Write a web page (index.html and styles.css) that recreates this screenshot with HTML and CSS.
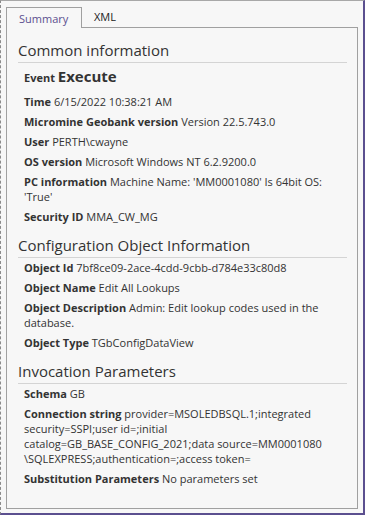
FILE: index.html
```html
<!DOCTYPE html>
<html lang="en">
<head>
  <meta charset="UTF-8">
  <meta name="viewport" content="width=device-width, initial-scale=1.0">
  <title>Event Summary</title>
  <link rel="stylesheet" href="styles.css">
</head>
<body>
  <div class="window">
    <div class="tabs">
      <div class="tab active">Summary</div>
      <div class="tab">XML</div>
    </div>

    <div class="tab-panel">
      <h2 class="section-title">Common information</h2>
      <div class="row event"><b>Event</b> <span class="event-name">Execute</span></div>
      <div class="row"><b>Time</b> 6/15/2022 10:38:21 AM</div>
      <div class="row"><b>Micromine Geobank version</b> Version 22.5.743.0</div>
      <div class="row"><b>User</b> PERTH\cwayne</div>
      <div class="row"><b>OS version</b> Microsoft Windows NT 6.2.9200.0</div>
      <div class="row"><b>PC information</b> Machine Name: 'MM0001080' Is 64bit OS: 'True'</div>
      <div class="row"><b>Security ID</b> MMA_CW_MG</div>

      <h2 class="section-title">Configuration Object Information</h2>
      <div class="row"><b>Object Id</b> 7bf8ce09-2ace-4cdd-9cbb-d784e33c80d8</div>
      <div class="row"><b>Object Name</b> Edit All Lookups</div>
      <div class="row"><b>Object Description</b> Admin: Edit lookup codes used in the database.</div>
      <div class="row"><b>Object Type</b> TGbConfigDataView</div>

      <h2 class="section-title">Invocation Parameters</h2>
      <div class="row"><b>Schema</b> GB</div>
      <div class="row"><b>Connection string</b> provider=MSOLEDBSQL.1;integrated security=SSPI;user id=;initial catalog=GB_BASE_CONFIG_2021;data source=MM0001080 \SQLEXPRESS;authentication=;access token=</div>
      <div class="row"><b>Substitution Parameters</b> No parameters set</div>
    </div>
  </div>
</body>
</html>
```

FILE: styles.css
```css
html, body {
  margin: 0;
  height: 100%;
}
body {
  font-family: "Open Sans", "Liberation Sans", sans-serif;
  background: #f7f7f7;
  color: #333;
}
.window {
  box-sizing: border-box;
  height: 515px;
  border-top: 1px solid #a8a8a8;
  border-left: 1px dashed #8a8a8a;
  border-right: 2px solid #5b4f8f;
  border-bottom: 2px solid #5b4f8f;
  padding: 5px 5px 4px 5px;
  display: flex;
  flex-direction: column;
}
.tabs {
  display: flex;
  height: 21px;
}
.tab {
  font-size: 11px;
  line-height: 21px;
  padding: 0 12px;
  color: #222;
}
.tab.active {
  width: 50px;
  border: 1px solid #a0a0a0;
  border-bottom: none;
  background: #f7f7f7;
  color: #5b4f8f;
  position: relative;
  top: 1px;
  z-index: 1;
}
.tab-panel {
  flex: 1;
  border: 1px solid #a0a0a0;
  padding: 11px 10px 0 11px;
}
.section-title {
  font-size: 15px;
  font-weight: normal;
  margin: 0 0 2px 0;
  padding: 0 0 1px 0;
  line-height: 22px;
  border-bottom: 1px solid #d4d4d4;
}
.row {
  font-size: 11px;
  line-height: 15px;
  margin: 0 0 5px 6px;
}
.row b {
  font-weight: bold;
}
.row.event {
  line-height: 23px;
}
.event-name {
  font-size: 15px;
  font-weight: bold;
}
.row + .section-title {
  margin-top: 10px;
}
```
